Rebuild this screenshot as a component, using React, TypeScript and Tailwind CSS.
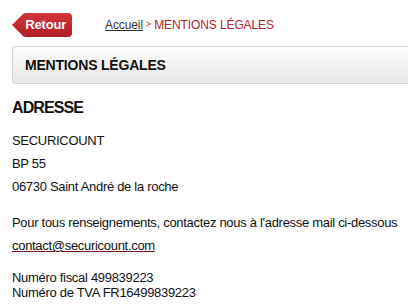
export default function App() {
  return (
    <div className="w-[408px] h-[308px] overflow-hidden bg-white font-['Liberation_Sans',Arial,sans-serif] text-[13px] text-[#111]">
      <div className="flex items-center pl-3 pt-[13px] h-[37px]">
        <button className="relative h-6 w-[60px] flex items-center justify-end pr-[6px]">
          <svg className="absolute left-0 top-0" width="60" height="24" viewBox="0 0 60 24">
            <defs>
              <linearGradient id="rg" x1="0" y1="0" x2="0" y2="1">
                <stop offset="0" stopColor="#d2353b" />
                <stop offset="1" stopColor="#b01e25" />
              </linearGradient>
            </defs>
            <path d="M0 12 L11 1 Q12 0 14 0 L56 0 Q60 0 60 4 L60 20 Q60 24 56 24 L14 24 Q12 24 11 23 Z" fill="url(#rg)" />
          </svg>
          <span className="relative text-white font-bold text-[13px] tracking-[-0.2px]">Retour</span>
        </button>
        <div className="ml-[33px] flex items-center gap-[3px] text-[12px] tracking-[-0.1px]">
          <a className="underline text-[#333]">Accueil</a>
          <span className="text-[#b5232b] text-[9px]">&gt;</span>
          <span className="text-[#b5232b]">MENTIONS LÉGALES</span>
        </div>
      </div>
      <div className="ml-3 mt-[9px] h-[38px] flex items-center pl-3 rounded-l-[4px] border border-r-0 border-[#d4d4d4] bg-gradient-to-b from-[#fcfcfc] to-[#e6e6e6]">
        <span className="font-bold text-[14px] tracking-[-0.2px] text-[#111]">MENTIONS LÉGALES</span>
      </div>
      <div className="px-3 tracking-[-0.3px]">
        <h2 className="mt-[14px] font-bold text-[16px] leading-[20px] tracking-[-0.9px]">ADRESSE</h2>
        <p className="mt-[11px] leading-[23px]">SECURICOUNT</p>
        <p className="leading-[23px]">BP 55</p>
        <p className="leading-[23px]">06730 Saint André de la roche</p>
        <p className="mt-[13px] leading-[23px] whitespace-nowrap">Pour tous renseignements, contactez nous à l'adresse mail ci-dessous</p>
        <a className="block leading-[23px] underline decoration-[#7a1a1e]">contact@securicount.com</a>
        <p className="mt-[13px] leading-[15px]">Numéro fiscal 499839223</p>
        <p className="leading-[15px]">Numéro de TVA FR16499839223</p>
      </div>
    </div>
  )
}
